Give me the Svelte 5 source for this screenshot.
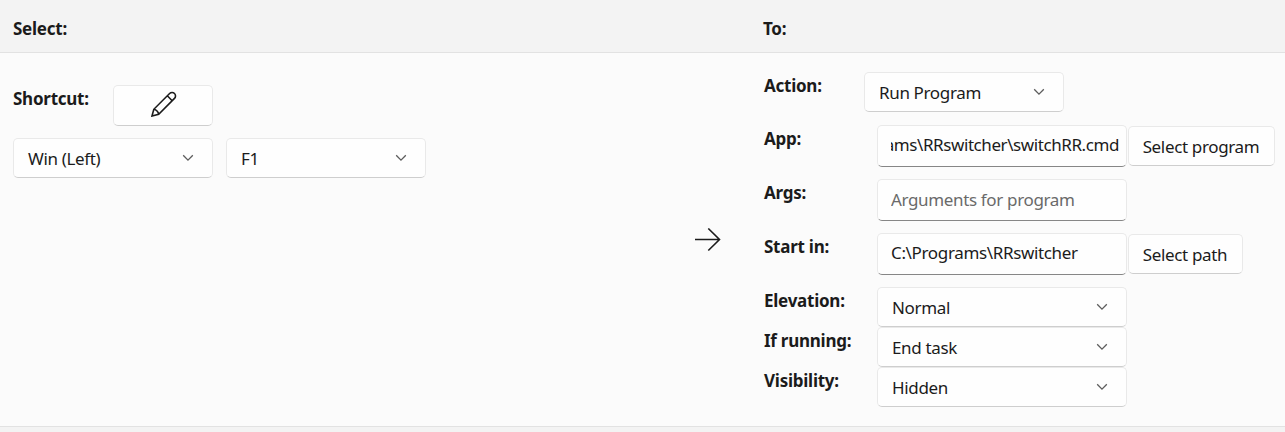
<script>
  const rows = [
    { label: 'App:', kind: 'input', value: 'C:\\Programs\\RRswitcher\\switchRR.cmd', button: 'Select program', buttonWidth: 147, end: true },
    { label: 'Args:', kind: 'input', placeholder: 'Arguments for program' },
    { label: 'Start in:', kind: 'input', value: 'C:\\Programs\\RRswitcher', button: 'Select path', buttonWidth: 115 },
    { label: 'Elevation:', kind: 'select', value: 'Normal' },
    { label: 'If running:', kind: 'select', value: 'End task' },
    { label: 'Visibility:', kind: 'select', value: 'Hidden' }
  ];
</script>

{#snippet combo(text)}
  <button class="control combo">
    <span>{text}</span>
    <svg class="chevron" width="12" height="8" viewBox="0 0 12 8"><path d="M1.2 1.3 6 6.1l4.8-4.8" /></svg>
  </button>
{/snippet}

<div class="page">
  <header>
    <strong class="from">Select:</strong>
    <strong>To:</strong>
  </header>

  <main>
    <section class="left">
      <div class="shortcut">
        <strong>Shortcut:</strong>
        <button class="control edit" aria-label="Edit">
          <svg width="26" height="26" viewBox="0 0 26 26">
            <path d="M1 25 2.8 18.3 18.6 2.5a3.45 3.45 0 0 1 4.9 4.9L7.7 23.2Z M16.3 4.8l4.9 4.9 M2.8 18.3c2.7.6 4.3 2.2 4.9 4.9" />
          </svg>
        </button>
      </div>
      <div class="keys">
        {@render combo('Win (Left)')}
        {@render combo('F1')}
      </div>
    </section>

    <div class="arrow">
      <svg width="26" height="24" viewBox="0 0 26 24"><path d="M0 11.5h24.5M13.3.5l11.2 11-11.2 11" /></svg>
    </div>

    <section class="right">
      <div class="row action">
        <strong>Action:</strong>
        {@render combo('Run Program')}
      </div>
      {#each rows as row}
        <div class="row {row.kind}">
          <strong>{row.label}</strong>
          {#if row.kind === 'select'}
            {@render combo(row.value)}
          {:else}
            <div class="control field" class:empty={!row.value}>
              <div class="value" class:end={row.end}><span>{row.value ?? row.placeholder}</span></div>
            </div>
            {#if row.button}
              <button class="control browse" style="width: {row.buttonWidth}px">{row.button}</button>
            {/if}
          {/if}
        </div>
      {/each}
    </section>
  </main>
</div>

<style>
  :global(body) { background: #f3f3f3; }
  .page {
    height: 432px;
    overflow: hidden;
    font: 17px/24px "Noto Sans", "Open Sans", sans-serif;
    color: #1b1b1b;
    letter-spacing: -0.35px;
  }
  header {
    box-sizing: border-box;
    height: 53px;
    padding: 17px 13px 0;
    display: flex;
    background: #f3f3f3;
    border-bottom: 1px solid #e2e2e2;
  }
  .from { width: 750px; }
  strong { font-weight: 700; letter-spacing: -0.25px; white-space: nowrap; }
  main {
    box-sizing: border-box;
    height: 374px;
    display: grid;
    grid-template-columns: 683px 50px 1fr;
    background: #fbfbfb;
    border-bottom: 1px solid #e2e2e2;
  }
  .control {
    box-sizing: border-box;
    flex: none;
    margin: 0;
    font: inherit;
    letter-spacing: inherit;
    color: inherit;
    white-space: nowrap;
    background: #fefefe;
    border: 1px solid #e9e9e9;
    border-bottom-color: #cecece;
    border-radius: 5px;
  }
  .combo {
    width: 200px;
    height: 40px;
    padding: 1px 18px 0 14px;
    display: flex;
    align-items: center;
    justify-content: space-between;
  }
  svg { display: block; fill: none; stroke: #1b1b1b; stroke-width: 1.6; }
  .chevron { stroke: #5d5d5d; stroke-width: 1.3; margin-top: -2px; }
  .left { padding: 32px 0 0 13px; }
  .shortcut { display: flex; }
  .shortcut strong { width: 100px; margin-top: 2px; }
  .edit {
    width: 100px;
    height: 41px;
    padding: 0 0 3px 1px;
    display: flex;
    align-items: center;
    justify-content: center;
  }
  .keys { display: flex; gap: 13px; margin-top: 12px; }
  .arrow { display: flex; align-items: center; justify-content: center; }
  .right { padding: 19px 0 0 31px; }
  .row { display: flex; align-items: flex-start; }
  .row strong { width: 113px; margin-top: 2px; }
  .action { margin-bottom: 13px; }
  .action strong { width: 100px; }
  .select .combo { width: 250px; }
  .input { margin-bottom: 12px; }
  .field {
    width: 250px;
    height: 42px;
    padding: 7px 7px 0 13px;
    border-bottom-color: #868686;
  }
  .empty { color: #6a6a6a; padding-top: 8px; }
  .value { overflow: hidden; display: flex; }
  .end { justify-content: flex-end; letter-spacing: -0.42px; }
  .browse { height: 40px; margin: 1px 0 0 1px; padding: 1px 1px 0 0; text-align: center; }
</style>
